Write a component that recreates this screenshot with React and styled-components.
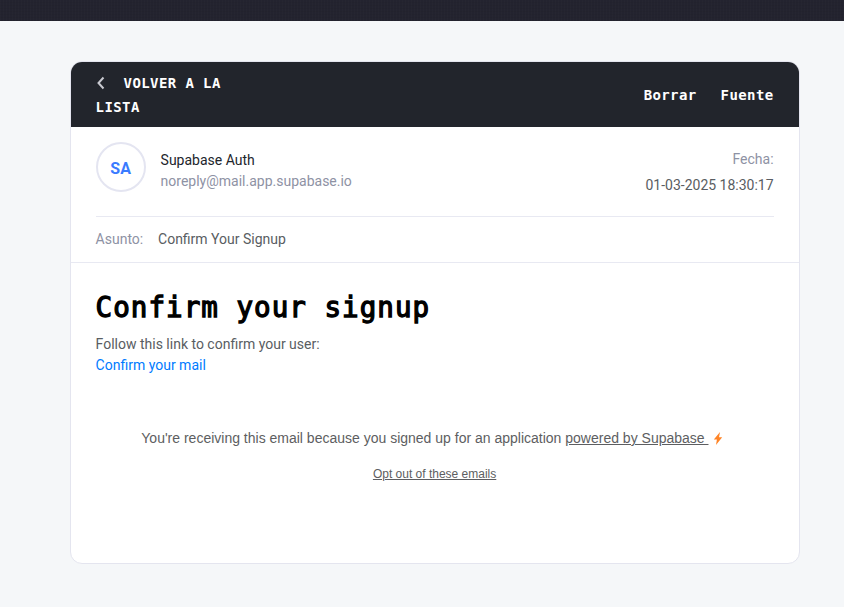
import React from "react";
import styled, { createGlobalStyle } from "styled-components";

const GlobalStyle = createGlobalStyle`
  * { box-sizing: border-box; }
  body {
    margin: 0;
    background: #f5f7f9;
    font-family: Roboto, sans-serif;
    font-size: 14px;
    line-height: 21px;
    color: #595d62;
  }
  h1, p { margin: 0; }
`;

const mono = `"DejaVu Sans Mono", monospace`;

const Page = styled.div`
  height: 607px;
  overflow: hidden;
  display: flex;
  flex-direction: column;
`;

const TopBand = styled.div`
  flex: none;
  height: 21px;
  background-color: #23232f;
  background-image:
    repeating-linear-gradient(90deg, rgba(255, 255, 255, 0.012) 0 1px, transparent 1px 3px),
    repeating-linear-gradient(0deg, rgba(0, 0, 0, 0.04) 0 1px, transparent 1px 3px);
`;

const Card = styled.main`
  width: 730px;
  height: 503px;
  margin: 40px 0 0 69.6px;
  background: #fff;
  border: 1px solid #e4e5ef;
  border-radius: 12px;
  overflow: hidden;
`;

const Toolbar = styled.header`
  height: 65px;
  padding: 0 25px;
  display: flex;
  align-items: center;
  justify-content: space-between;
  background: #22252c;
  color: #fff;
  font: 700 14px/24px ${mono};
  letter-spacing: 0.4px;
`;

const BackLink = styled.a`
  width: 150px;
`;

const BackIcon = styled.svg`
  width: 10px;
  height: 14px;
  margin-right: 18px;
  vertical-align: -2px;
`;

const Actions = styled.nav`
  display: flex;
  gap: 24px;
  padding-top: 1px;
`;

const Meta = styled.section`
  height: 90px;
  margin: 0 25px;
  padding-top: 15px;
  display: flex;
  align-items: flex-start;
  border-bottom: 1px solid #e8e9f2;
`;

const Avatar = styled.div`
  width: 50px;
  height: 50px;
  margin-right: 15px;
  padding-top: 2px;
  display: flex;
  align-items: center;
  justify-content: center;
  border: 2px solid #e4e5f1;
  border-radius: 50%;
  color: #3a7bff;
  font-size: 16px;
  font-weight: 700;
`;

const Sender = styled.div`
  flex: 1;
  padding-top: 8px;
  color: #8e92a4;
`;

const Name = styled.div`
  color: #22252c;
`;

const DateBlock = styled.div`
  padding-top: 4px;
  line-height: 26px;
  text-align: right;
`;

const Label = styled.span`
  color: #8e92a4;
`;

const Subject = styled.section`
  height: 46px;
  padding: 0 25px;
  display: flex;
  align-items: center;
  gap: 14.8px;
  border-bottom: 1px solid #e8e9f2;
`;

const Body = styled.article`
  padding: 24px 25px 0;
`;

const Title = styled.h1`
  margin-bottom: 7px;
  color: #000;
  font: 400 27.5px/40px ${mono};
  letter-spacing: 1.05px;
  -webkit-text-stroke: 1.3px #000;
  white-space: nowrap;
`;

const ConfirmLink = styled.a`
  display: block;
  color: #007bff;
`;

const Footer = styled.footer`
  margin-top: 52px;
  text-align: center;
  font-family: "Liberation Sans", Arial, sans-serif;
  color: #5d5e61;
  white-space: pre;
`;

const FooterLink = styled.a`
  text-decoration: underline;
  font-size: ${(p) => p.$size || "14px"};
`;

const Notice = styled.p`
  margin-bottom: 14px;
  padding-right: 5px;
`;

const Bolt = styled.svg`
  width: 10px;
  height: 13px;
  margin-left: 4.4px;
  vertical-align: -2px;
`;

export default function App() {
  return (
    <>
      <GlobalStyle />
      <Page>
        <TopBand />
        <Card>
          <Toolbar>
            <BackLink>
              <BackIcon viewBox="0 0 10 14" fill="none" stroke="#c8c9d0" strokeWidth="2">
                <path d="M7.5 1.5 2.5 7l5 5.5" />
              </BackIcon>
              VOLVER A LA LISTA
            </BackLink>
            <Actions>
              <span>Borrar</span>
              <span>Fuente</span>
            </Actions>
          </Toolbar>
          <Meta>
            <Avatar>SA</Avatar>
            <Sender>
              <Name>Supabase Auth</Name>
              <div>noreply@mail.app.supabase.io</div>
            </Sender>
            <DateBlock>
              <Label>Fecha:</Label>
              <div>01-03-2025 18:30:17</div>
            </DateBlock>
          </Meta>
          <Subject>
            <Label>Asunto:</Label>
            <span>Confirm Your Signup</span>
          </Subject>
          <Body>
            <Title>Confirm your signup</Title>
            <p>Follow this link to confirm your user:</p>
            <ConfirmLink>Confirm your mail</ConfirmLink>
            <Footer>
              <Notice>
                You're receiving this email because you signed up for an application{" "}
                <FooterLink>{"powered by Supabase "}</FooterLink>
                <Bolt viewBox="0 0 10 13" fill="#ff8426">
                  <path d="M7 0 .8 7.4h3.1L3 13l6.2-7.8H6z" />
                </Bolt>
              </Notice>
              <FooterLink $size="12px">Opt out of these emails</FooterLink>
            </Footer>
          </Body>
        </Card>
      </Page>
    </>
  );
}
